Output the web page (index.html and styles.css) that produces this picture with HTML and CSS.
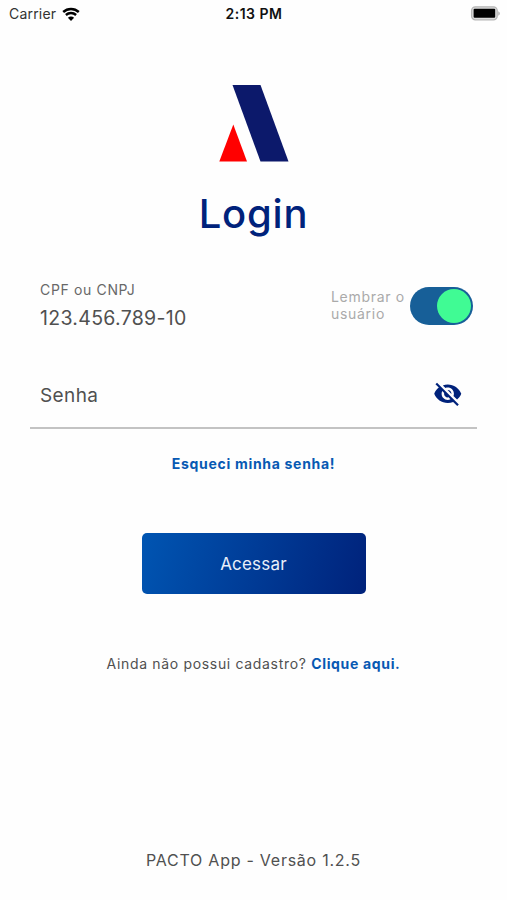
FILE: index.html
```html
<!DOCTYPE html>
<html lang="pt-BR">
<head>
<meta charset="utf-8">
<title>Login</title>
<link rel="stylesheet" href="styles.css">
</head>
<body>
<header class="status">
  <div class="carrier"><span>Carrier</span>
    <svg class="wifi" width="18" height="14" viewBox="0 0 18 14">
      <path d="M1.2 5C5.6.9 12.4.9 16.8 5M3.9 8c2.9-2.7 7.3-2.7 10.2 0" fill="none" stroke="#000" stroke-width="2.4"/>
      <path d="M9 14 5.9 10.8c1.7-1.6 4.5-1.6 6.2 0z"/>
    </svg>
  </div>
  <time class="time">2:13 PM</time>
  <svg class="battery" width="31" height="15" viewBox="0 0 31 15">
    <rect x="1.6" y=".8" width="25.6" height="13" rx="3.8" fill="#ddd" stroke="#b5b5b5" stroke-width="1.3"/>
    <rect x="3.6" y="2.8" width="21.6" height="9" rx="1"/>
    <path d="M28.3 5.3c2 .8 2 3.6 0 4.4z" fill="#aaa"/>
  </svg>
</header>
<main class="login">
  <svg class="logo" width="70" height="77" viewBox="0 0 70 77">
    <path d="M13.5 0H41.5L69.5 76.5H41.5z" fill="#0c196b"/>
    <path d="M14.3 39.5 28 76.5H.3z" fill="#f00"/>
  </svg>
  <h1 class="title">Login</h1>
  <section class="user">
    <div class="document">
      <div class="label">CPF ou CNPJ</div>
      <div class="value">123.456.789-10</div>
    </div>
    <div class="remember">Lembrar o<br>usuário</div>
    <div class="switch"><div class="thumb"></div></div>
  </section>
  <section class="password">
    <span class="placeholder">Senha</span>
    <svg class="eye" width="29.5" height="29.5" viewBox="0 0 24 24"><path fill="#00227b" d="M12 7c2.76 0 5 2.24 5 5 0 .65-.13 1.26-.36 1.83l2.92 2.92c1.51-1.26 2.7-2.89 3.43-4.75-1.73-4.39-6-7.5-11-7.5-1.4 0-2.74.25-3.98.7l2.16 2.16C10.74 7.13 11.35 7 12 7zM2 4.27l2.28 2.28.46.46C3.08 8.3 1.78 10.02 1 12c1.73 4.39 6 7.5 11 7.5 1.55 0 3.03-.3 4.38-.84l.42.42L19.73 22 21 20.73 3.27 3 2 4.27zM7.53 9.8l1.55 1.55c-.05.21-.08.43-.08.65 0 1.66 1.34 3 3 3 .22 0 .44-.03.65-.08l1.55 1.55c-.67.33-1.41.53-2.2.53-2.76 0-5-2.24-5-5 0-.79.2-1.53.53-2.2zm4.31-.78l3.15 3.15.02-.16c0-1.66-1.34-3-3-3l-.17.01z"/></svg>
  </section>
  <a class="forgot">Esqueci minha senha!</a>
  <button class="submit">Acessar</button>
  <p class="signup">Ainda não possui cadastro? <a class="link">Clique aqui.</a></p>
</main>
<footer class="version">PACTO App - Versão 1.2.5</footer>
</body>
</html>
```
FILE: styles.css
```css
* { box-sizing: border-box; }
body {
  margin: 0;
  height: 900px;
  display: flex;
  flex-direction: column;
  background: #fefefe;
  color: #505050;
  font-family: Inter, "Liberation Sans", sans-serif;
}
.status {
  height: 27px;
  display: grid;
  grid-template-columns: 1fr auto 1fr;
  align-items: center;
  padding: 0 6px 0 9px;
  color: #111;
  font-size: 14px;
}
.carrier { display: flex; align-items: center; gap: 6px; color: #333; letter-spacing: 0.2px; }
.time { font-weight: 600; letter-spacing: 0.5px; margin-right: 2px; }
.battery { justify-self: end; }
.login { display: flex; flex-direction: column; align-items: center; }
.logo { margin-top: 58px; }
.title {
  margin: 28px 0 0;
  font-size: 40px;
  line-height: 48px;
  font-weight: 450;
  letter-spacing: 0.8px;
  color: #00227b;
}
.user {
  width: 447px;
  height: 60px;
  margin-top: 39px;
  padding: 0 4px 0 10px;
  display: flex;
}
.document { width: 291px; }
.label { margin-top: 4px; font-size: 14px; line-height: 18px; letter-spacing: 0.65px; color: #686868; }
.value { margin-top: 7px; font-size: 19.5px; line-height: 24px; letter-spacing: 0.3px; }
.remember { width: 79px; padding-top: 11px; font-size: 14px; line-height: 17px; letter-spacing: 0.7px; color: #aaa; white-space: nowrap; }
.switch {
  width: 63px;
  height: 38px;
  margin-top: 10px;
  padding: 2px;
  border-radius: 19px;
  background: #175f98;
  display: flex;
  justify-content: flex-end;
}
.thumb { width: 34px; height: 34px; border-radius: 50%; background: #40fb94; }
.password {
  width: 447px;
  height: 65px;
  margin-top: 27px;
  padding: 0 15px 3px 10px;
  border-bottom: 2px solid #c3c3c3;
  display: flex;
  justify-content: space-between;
  align-items: center;
}
.placeholder { padding-top: 2px; font-size: 19px; letter-spacing: 0.4px; }
.forgot { margin-top: 26px; font-size: 14px; line-height: 18px; font-weight: 700; letter-spacing: 0.7px; color: #0759b3; }
.submit {
  width: 224px;
  height: 61px;
  margin-top: 60px;
  border: 0;
  border-radius: 5px;
  background: linear-gradient(105deg, #0055b2, #00227b);
  color: #e9effa;
  font: 400 17px Inter, sans-serif;
  letter-spacing: 0.2px;
}
.signup { margin: 61px 0 0; font-size: 14px; line-height: 18px; letter-spacing: 0.67px; }
.link { font-weight: 700; color: #0759b3; }
.version { margin: auto 0 30px; text-align: center; font-size: 16px; line-height: 20px; letter-spacing: 0.75px; }
```
